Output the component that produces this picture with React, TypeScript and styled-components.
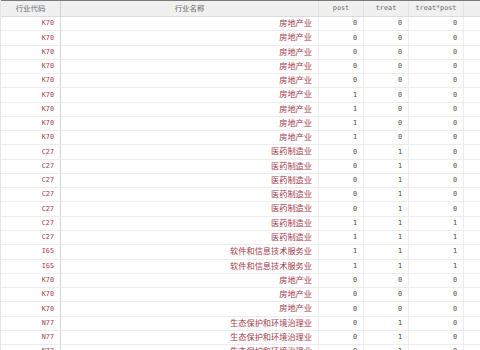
import React from 'react';
import { styled, createGlobalStyle } from 'styled-components';

const GlobalStyle = createGlobalStyle`
  html, body {
    margin: 0;
    padding: 0;
    background: #fff;
    overflow: hidden;
  }
`;

type Obs = { code: string; name: string; post: number; treat: number };

const group = (code: string, name: string, posts: number[], treat: number): Obs[] =>
  posts.map((post) => ({ code, name, post, treat }));

const rows: Obs[] = [
  ...group('K70', '房地产业', [0, 0, 0, 0, 0, 1, 1, 1, 1], 0),
  ...group('C27', '医药制造业', [0, 0, 0, 0, 0, 1, 1], 1),
  ...group('I65', '软件和信息技术服务业', [1, 1], 1),
  ...group('K70', '房地产业', [0, 0, 0], 0),
  ...group('N77', '生态保护和环境治理业', [0, 0, 0], 1),
];

const COLS = '60px 258px 45px 45px 55px 1fr';
const MONO = '"DejaVu Sans Mono", "Liberation Mono", monospace';
const CJK = '"Noto Sans CJK SC", "Noto Sans", sans-serif';

const App = () => {
  return (
    <>
      <GlobalStyle />
      <SBrowser>
        <SHeader>
          <SHeadCell $cjk>行业代码</SHeadCell>
          <SHeadCell $cjk>行业名称</SHeadCell>
          <SHeadCell>post</SHeadCell>
          <SHeadCell>treat</SHeadCell>
          <SHeadCell>treat*post</SHeadCell>
          <SHeadCell />
        </SHeader>
        {rows.map((r, i) => (
          <SRow key={i}>
            <SCodeCell>{r.code}</SCodeCell>
            <SNameCell>{r.name}</SNameCell>
            <SNumCell>{r.post}</SNumCell>
            <SNumCell>{r.treat}</SNumCell>
            <SNumCell>{r.post * r.treat}</SNumCell>
            <SCell />
          </SRow>
        ))}
      </SBrowser>
    </>
  );
};

export default App;

const SBrowser = styled.div`
  width: 480px;
  height: 350px;
  overflow: hidden;
  border-left: 1px solid #e4e4e4;
  box-sizing: border-box;
`;

const SHeader = styled.div`
  display: grid;
  grid-template-columns: ${COLS};
  height: 17px;
  box-sizing: border-box;
  border-top: 1px solid #7a7a7a;
  border-bottom: 1px solid #dcdcdc;
  background-color: #f0f0f0;
`;

const SHeadCell = styled.div<{ $cjk?: boolean }>`
  display: flex;
  align-items: center;
  justify-content: center;
  line-height: 1;
  padding-bottom: ${({ $cjk }) => ($cjk ? '2px' : '0')};
  font-family: ${({ $cjk }) => ($cjk ? CJK : MONO)};
  font-size: ${({ $cjk }) => ($cjk ? '7.4px' : '6.8px')};
  color: #6a6a6a;
  border-right: 1px solid #e2e2e2;
  &:first-child {
    border-right-color: #d2d2d2;
  }
  &:last-child {
    border-right: none;
  }
`;

const SRow = styled.div`
  display: grid;
  grid-template-columns: ${COLS};
  height: 14.27px;
  box-sizing: border-box;
  border-bottom: 1px solid #ececec;
`;

const SCell = styled.div`
  display: flex;
  align-items: center;
  justify-content: flex-end;
  padding-right: 6px;
  line-height: 1;
  overflow: hidden;
  white-space: nowrap;
  border-right: 1px solid #ececec;
  &:last-child {
    border-right: none;
  }
`;

const SCodeCell = styled(SCell)`
  font-family: ${MONO};
  font-size: 6.8px;
  color: #a23a4c;
  border-right-color: #d4d4d4;
`;

const SNameCell = styled(SCell)`
  font-family: ${CJK};
  font-size: 8.2px;
  color: #a23a4c;
  padding-bottom: 3px;
`;

const SNumCell = styled(SCell)`
  font-family: ${MONO};
  font-size: 6.8px;
  color: #4a4a4a;
`;
